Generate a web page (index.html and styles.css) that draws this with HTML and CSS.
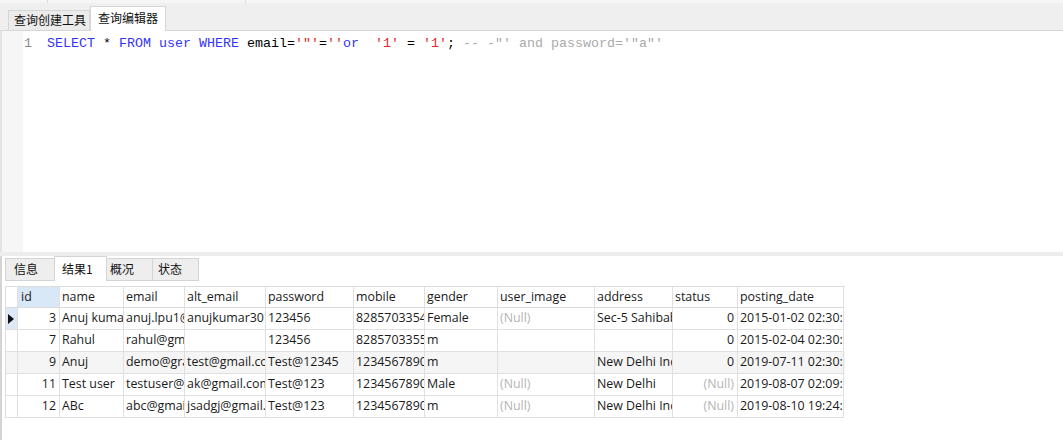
FILE: index.html
```html
<!DOCTYPE html>
<html>
<head>
<meta charset="utf-8">
<link rel="stylesheet" href="styles.css">
</head>
<body>
<div class="app">
  <div class="topbar">
    <div class="toolstrip"><span class="ts ts1"></span><span class="ts ts2"></span><span class="ts ts3"></span></div>
    <div class="qtabs">
      <div class="qlead"></div>
      <div class="qtab">查询创建工具</div>
      <div class="qtab active">查询编辑器</div>
      <div class="qfill"></div>
    </div>
  </div>
  <div class="editor">
    <div class="gutter"></div>
    <div class="lnum">1</div>
    <div class="code"><span class="kw">SELECT</span> * <span class="kw">FROM</span> <span class="kw">user</span> <span class="kw">WHERE</span> email=<span class="str">'"'</span>=<span class="str">''</span><span class="kw">or</span>  <span class="str">'1'</span> = <span class="str">'1'</span>; <span class="cm">-- -"' and password='"a"'</span></div>
  </div>
  <div class="splitter"></div>
  <div class="results">
    <div class="rtabs">
      <div class="rtab rt1">信息</div>
      <div class="rtab rt2 active">结果1</div>
      <div class="rtab rt3">概况</div>
      <div class="rtab rt4">状态</div>
    </div>
    <div class="grid">
      <div class="row head">
        <div class="c ind"></div>
        <div class="c sel">id</div>
        <div class="c">name</div>
        <div class="c">email</div>
        <div class="c">alt_email</div>
        <div class="c">password</div>
        <div class="c">mobile</div>
        <div class="c">gender</div>
        <div class="c">user_image</div>
        <div class="c">address</div>
        <div class="c">status</div>
        <div class="c">posting_date</div>
      </div>
      <div class="row">
        <div class="c ind cur"><svg class="arrow" width="6" height="10" viewBox="0 0 6 10"><polygon points="0,0 6,5 0,10" fill="#111"/></svg></div>
        <div class="c num">3</div>
        <div class="c">Anuj kumar</div>
        <div class="c">anuj.lpu1@gmail.com</div>
        <div class="c">anujkumar3015@gmail.com</div>
        <div class="c">123456</div>
        <div class="c">8285703354</div>
        <div class="c">Female</div>
        <div class="c null">(Null)</div>
        <div class="c">Sec-5 Sahibabad</div>
        <div class="c num">0</div>
        <div class="c">2015-01-02 02:30:00</div>
      </div>
      <div class="row">
        <div class="c ind"></div>
        <div class="c num">7</div>
        <div class="c">Rahul</div>
        <div class="c">rahul@gmail.com</div>
        <div class="c"></div>
        <div class="c">123456</div>
        <div class="c">8285703355</div>
        <div class="c">m</div>
        <div class="c"></div>
        <div class="c"></div>
        <div class="c num">0</div>
        <div class="c">2015-02-04 02:30:00</div>
      </div>
      <div class="row alt">
        <div class="c ind"></div>
        <div class="c num">9</div>
        <div class="c">Anuj</div>
        <div class="c">demo@grail.com</div>
        <div class="c">test@gmail.com</div>
        <div class="c">Test@12345</div>
        <div class="c">1234567890</div>
        <div class="c">m</div>
        <div class="c"></div>
        <div class="c">New Delhi India</div>
        <div class="c num">0</div>
        <div class="c">2019-07-11 02:30:00</div>
      </div>
      <div class="row">
        <div class="c ind"></div>
        <div class="c num">11</div>
        <div class="c">Test user</div>
        <div class="c">testuser@gmail.com</div>
        <div class="c">ak@gmail.com</div>
        <div class="c">Test@123</div>
        <div class="c">1234567890</div>
        <div class="c">Male</div>
        <div class="c null">(Null)</div>
        <div class="c">New Delhi</div>
        <div class="c num null">(Null)</div>
        <div class="c">2019-08-07 02:09:00</div>
      </div>
      <div class="row">
        <div class="c ind"></div>
        <div class="c num">12</div>
        <div class="c">ABc</div>
        <div class="c">abc@gmail.com</div>
        <div class="c">jsadgj@gmail.com</div>
        <div class="c">Test@123</div>
        <div class="c">1234567890</div>
        <div class="c">m</div>
        <div class="c null">(Null)</div>
        <div class="c">New Delhi India</div>
        <div class="c num null">(Null)</div>
        <div class="c">2019-08-10 19:24:00</div>
      </div>
    </div>
  </div>
</div>
</body>
</html>
```
FILE: styles.css
```css
html, body {
  margin: 0;
  padding: 0;
  background: #ffffff;
}
body {
  font-family: "Open Sans", "Noto Sans CJK SC", sans-serif;
  font-size: 12px;
  color: #1a1a1a;
}
.app {
  width: 1063px;
  height: 440px;
  overflow: hidden;
  display: flex;
  flex-direction: column;
}

/* top tab strip */
.topbar {
  flex: 0 0 31px;
  display: flex;
  flex-direction: column;
  background: #efefef;
}
.toolstrip {
  flex: 0 0 3px;
  display: flex;
  background: #f6f6f6;
}
.ts {
  display: block;
  height: 3px;
  border-right: 1px solid #dcdcdc;
}
.ts1 { width: 47px; }
.ts2 { width: 197px; }
.ts3 { flex: 1; border-right: none; }
.qtabs {
  flex: 1;
  display: flex;
  align-items: flex-end;
}
.qlead {
  width: 8px;
  align-self: stretch;
  border-bottom: 1px solid #d6d6d6;
}
.qfill {
  flex: 1;
  align-self: stretch;
  border-bottom: 1px solid #d6d6d6;
}
.qtab {
  box-sizing: border-box;
  height: 21px;
  width: 82px;
  border: 1px solid #d6d6d6;
  background: #ebebeb;
  padding-left: 5px;
  font-family: "Noto Sans CJK SC", sans-serif;
  line-height: 18px;
  color: #111;
}
.qtab.active {
  height: 25px;
  width: 76px;
  background: #ffffff;
  border-bottom: none;
  padding-left: 7px;
  line-height: 22px;
}

/* editor */
.editor {
  flex: 0 0 221px;
  display: flex;
  border-left: 2px solid #e4e4e4;
  background: #ffffff;
}
.gutter {
  width: 21px;
  background: #f6f6f6;
}
.lnum, .code {
  font-family: "Liberation Mono", monospace;
  font-size: 13.33px;
  line-height: 16px;
  padding-top: 5px;
  white-space: pre;
}
.lnum {
  width: 23px;
  padding-left: 1px;
  color: #8c8c8c;
}
.code {
  flex: 1;
  color: #000;
}
.kw { color: #3434f8; }
.str { color: #dd2a2a; }
.cm { color: #ababab; }

.splitter {
  flex: 0 0 4px;
  background: #ececec;
}

/* results */
.results {
  flex: 1;
  border-left: 2px solid #d4d4d4;
  padding-left: 3px;
  background: #fff;
}
.rtabs {
  height: 25px;
  display: flex;
  align-items: flex-end;
}
.rtab {
  box-sizing: border-box;
  height: 23px;
  border: 1px solid #d4d4d4;
  background: #eeeeee;
  font-family: "Noto Sans CJK SC", sans-serif;
  line-height: 20px;
  color: #111;
}
.rtab.active {
  height: 25px;
  background: #ffffff;
  border-bottom: none;
  line-height: 23px;
}
.rt1 { width: 50px; padding-left: 8px; }
.rt2 { width: 53px; padding-left: 7px; margin-left: -1px; }
.rt3 { width: 47px; padding-left: 3px; margin-left: -1px; }
.rt4 { width: 47px; padding-left: 5px; margin-left: -1px; }

.grid {
  margin-top: 5px;
  width: 839px;
  border-left: 1px solid #dcdcdc;
  font-size: 12.4px;
}
.row {
  display: grid;
  grid-template-columns: 12px 42px 64px 61px 81px 88px 71px 73px 97px 78px 65px 106px;
  height: 22px;
}
.row.head {
  border-top: 1px solid #dcdcdc;
  height: 21px;
}
.row.alt { background: #f5f5f5; }
.c {
  box-sizing: border-box;
  border-right: 1px solid #e0e0e0;
  border-bottom: 1px solid #e0e0e0;
  padding: 0 3px 0 2px;
  overflow: hidden;
  white-space: nowrap;
  line-height: 20px;
  color: #1a1a1a;
}
.head .c {
  border-bottom-color: #dadada;
  background: #ffffff;
  line-height: 19px;
}
.head .c.sel { background: #d9e8f7; padding-left: 3px; }
.c.ind { padding: 0; }
.c.cur {
  background: #dde9f6;
  display: flex;
  align-items: center;
  padding-left: 2px;
}
.arrow { display: block; }
.num { text-align: right; }
.null { color: #b4b4b4; }
```
